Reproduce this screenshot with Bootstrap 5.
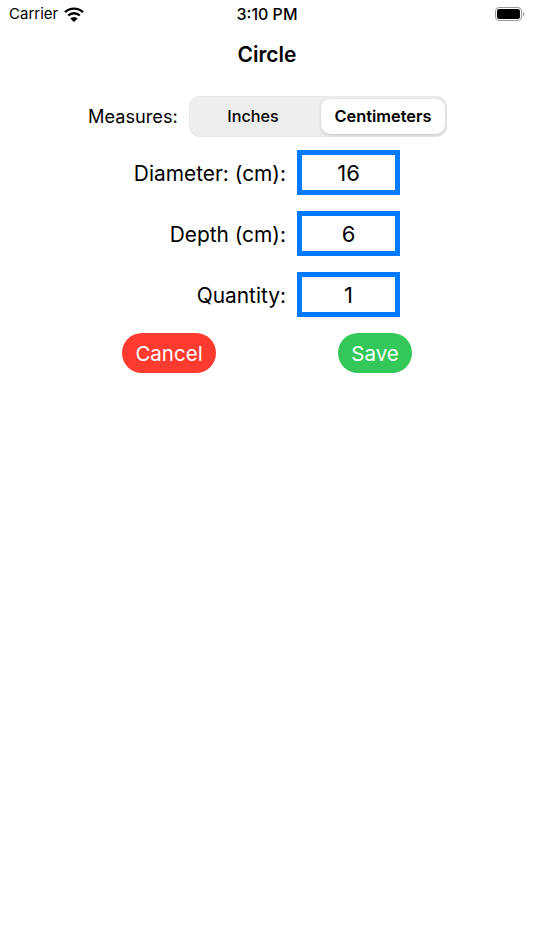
<!DOCTYPE html>
<html lang="en">
<head>
<meta charset="utf-8">
<title>Circle</title>
<link rel="stylesheet" href="https://cdn.jsdelivr.net/npm/bootstrap@5.3.0/dist/css/bootstrap.min.css">
<style>
html, body { background: #fff; }
body { width: 534px; height: 950px; overflow: hidden; font-family: Inter, "Liberation Sans", sans-serif; color: #000; }
.status-bar { height: 28px; padding: 0 9px; font-size: 15px; }
.status-side { width: 120px; }
.status-carrier { gap: 6px; }
.status-time { font-size: 16px; font-weight: 500; }
.title-text { font-size: 21px; font-weight: 600; line-height: 25px; margin-top: 14px; height: 25px; }
.form-area { margin-top: 29px; }
.measure-row { height: 41px; padding-left: 88px; }
.measure-label { width: 101px; font-size: 18.200px; }
.seg-wrap { width: 258px; height: 41px; background: #eeeeef; border-radius: 11px; padding: 3px 2px; box-shadow: inset 0 0 0 1px #e9e9ea; }
.seg-opt { font-size: 16.200px; border: 0; background: transparent; padding: 0; color: #000; }
.seg-opt-off { width: 130px; padding-right: 6px; font-weight: 500; }
.seg-opt-on { width: 124px; background: #fff; border-radius: 9px; font-weight: 600; font-size: 16.400px; box-shadow: 0 1px 3px rgba(0,0,0,.2); }
.field-row { height: 45px; margin-top: 16px; }
.field-row-first { margin-top: 13px; }
.field-label { width: 286px; text-align: right; font-size: 20.900px; padding-top: 2px; margin: 0; }
.field-box { width: 103px; height: 45px; margin-left: 11px; border: 5px solid #007aff; border-radius: 0; text-align: center; font-size: 22px; padding: 0; color: #000; box-shadow: none; font-family: inherit; }
.action-row { margin-top: 16px; padding-left: 122px; width: 412px; }
.pill { height: 40px; border-radius: 20px; border: 0; color: #fff; font-size: 20.500px; padding: 1px 0 0; line-height: 39px; }
.pill-red { width: 94px; background: #ff3b30; }
.pill-green { width: 74px; background: #34c759; }
</style>
</head>
<body>
<div class="status-bar d-flex align-items-center justify-content-between">
  <div class="status-side status-carrier d-flex align-items-center">
    <span>Carrier</span>
    <svg width="20" height="15" viewBox="0 0 20 15" aria-hidden="true"><g fill="none" stroke="#000" stroke-width="2.400"><path d="M1 5.200a13 13 0 0 1 18 0"/><path d="M4.200 8.500a8.400 8.400 0 0 1 11.600 0"/></g><path d="M6.300 11.500a5.200 5.200 0 0 1 7.400 0L10 15z" fill="#000"/></svg>
  </div>
  <div class="status-time">3:10 PM</div>
  <div class="status-side d-flex justify-content-end">
    <svg width="30" height="14" viewBox="0 0 30 14" aria-hidden="true"><rect x=".5" y=".5" width="26" height="13" rx="3.500" fill="none" stroke="#999"/><rect x="2" y="2" width="23" height="10" rx="2.200" fill="#000"/><path d="M28 5v4c.8-.3 1.300-1.100 1.300-2S28.800 5.300 28 5z" fill="#999"/></svg>
  </div>
</div>
<div class="title-text text-center">Circle</div>
<div class="form-area">
  <div class="measure-row d-flex align-items-center">
    <div class="measure-label">Measures:</div>
    <div class="seg-wrap d-flex">
      <button class="seg-opt seg-opt-off" type="button">Inches</button>
      <button class="seg-opt seg-opt-on" type="button">Centimeters</button>
    </div>
  </div>
  <div class="field-row field-row-first d-flex align-items-center">
    <label class="field-label">Diameter: (cm):</label>
    <input class="field-box form-control" value="16">
  </div>
  <div class="field-row d-flex align-items-center">
    <label class="field-label">Depth (cm):</label>
    <input class="field-box form-control" value="6">
  </div>
  <div class="field-row d-flex align-items-center">
    <label class="field-label">Quantity:</label>
    <input class="field-box form-control" value="1">
  </div>
  <div class="action-row d-flex justify-content-between">
    <button class="btn pill pill-red" type="button">Cancel</button>
    <button class="btn pill pill-green" type="button">Save</button>
  </div>
</div>
<script src="https://cdn.jsdelivr.net/npm/bootstrap@5.3.0/dist/js/bootstrap.bundle.min.js"></script>
</body>
</html>
